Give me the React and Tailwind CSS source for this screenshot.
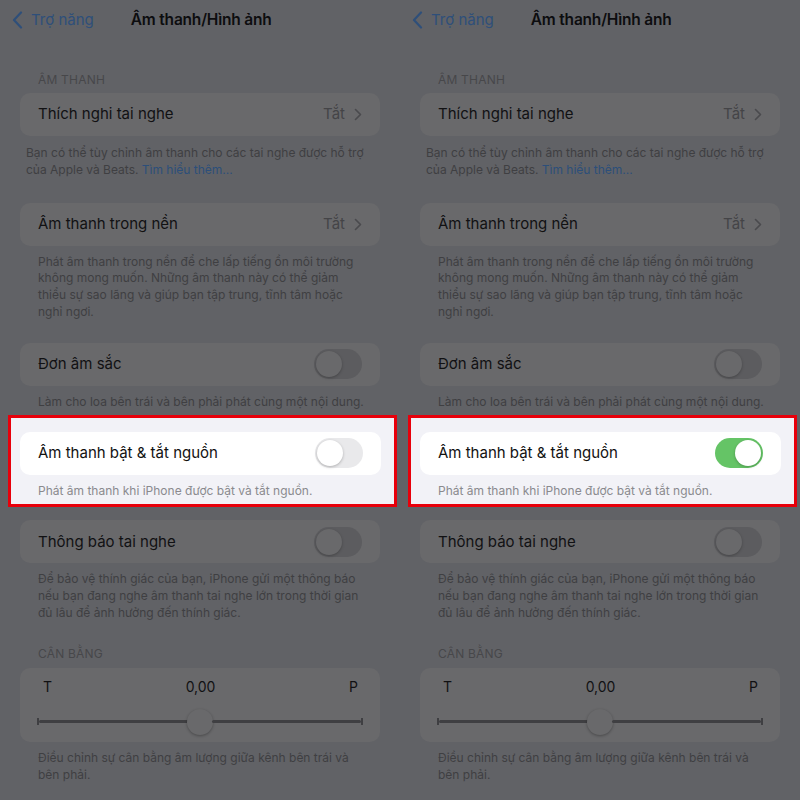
import React from 'react'

const font = { fontFamily: "Inter, 'Noto Sans', sans-serif" }

function Chevron({ className }) {
  return (
    <svg width="8" height="13" viewBox="0 0 8 13" fill="none" className={className}>
      <path d="M1.5 1.5L6.5 6.5L1.5 11.5" stroke="currentColor" strokeWidth="1.6" strokeLinecap="round" strokeLinejoin="round" />
    </svg>
  )
}

function Toggle({ on, dim }) {
  if (dim) {
    return (
      <div className="w-[48px] h-[30px] rounded-full bg-[#5c5c5f] p-[2px] flex">
        <div className="w-[26px] h-[26px] rounded-full bg-[#69696b] shadow-[0_1px_3px_rgba(0,0,0,0.25)]" />
      </div>
    )
  }
  return (
    <div className={`w-[48px] h-[30px] rounded-full p-[2px] flex ${on ? 'bg-[#65c466] justify-end' : 'bg-[#e9e9eb] justify-start'}`}>
      <div className="w-[26px] h-[26px] rounded-full bg-white shadow-[0_1px_3px_rgba(0,0,0,0.25)]" />
    </div>
  )
}

function DimRow({ label, value, toggle }) {
  return (
    <div className="mx-[20px] h-[43px] rounded-[10px] bg-[#69696b] flex items-center pl-[18px] pr-[18px]">
      <span className="text-[15px] text-[#111113] flex-grow">{label}</span>
      {value && (
        <div className="flex items-center gap-[9px] text-[#444447]">
          <span className="text-[15px]">{value}</span>
          <Chevron className="text-[#4a4a4d]" />
        </div>
      )}
      {toggle && <Toggle dim />}
    </div>
  )
}

function Footer({ lines, className = 'pl-[38px]' }) {
  return (
    <div className={`${className} pr-[10px] text-[12px] leading-[16.8px] text-[#3f3f42]`}>
      {lines.map((l, i) => (
        <div key={i}>{l}</div>
      ))}
    </div>
  )
}

function Panel({ on }) {
  return (
    <div className="w-[400px] h-[800px] bg-[#616266] overflow-hidden" style={font}>
      {/* nav bar */}
      <div className="h-[40px] flex items-center">
        <div className="flex items-center pl-[12px] gap-[8px] text-[#2e4f7a]">
          <svg width="11" height="18" viewBox="0 0 11 18" fill="none">
            <path d="M9 1.5L2 9L9 16.5" stroke="currentColor" strokeWidth="2.2" strokeLinecap="round" strokeLinejoin="round" />
          </svg>
          <span className="text-[15px]">Trợ năng</span>
        </div>
        <span className="ml-[37px] text-[15.5px] font-semibold text-[#0d0d0f] tracking-[-0.2px]">Âm thanh/Hình ảnh</span>
      </div>

      <div className="pt-[31px] pl-[38px] text-[12px] text-[#47474a] tracking-[0.2px] h-[53px]">ÂM THANH</div>
      <DimRow label="Thích nghi tai nghe" value="Tắt" />
      <div className="pt-[9px]">
        <Footer
          className="pl-[26px]"
          lines={[
            'Bạn có thể tùy chỉnh âm thanh cho các tai nghe được hỗ trợ',
            <>
              của Apple và Beats. <span className="text-[#2c4f7a]">Tìm hiểu thêm...</span>
            </>,
          ]}
        />
      </div>

      <div className="h-[24px]" />
      <DimRow label="Âm thanh trong nền" value="Tắt" />
      <div className="pt-[8px]">
        <Footer
          lines={[
            'Phát âm thanh trong nền để che lấp tiếng ồn môi trường',
            'không mong muốn. Những âm thanh này có thể giảm',
            'thiểu sự sao lãng và giúp bạn tập trung, tĩnh tâm hoặc',
            'nghỉ ngơi.',
          ]}
        />
      </div>

      <div className="h-[22px]" />
      <DimRow label="Đơn âm sắc" toggle />
      <div className="pt-[8px]">
        <Footer lines={['Làm cho loa bên trái và bên phải phát cùng một nội dung.']} />
      </div>

      {/* highlighted section */}
      <div className="mt-[4px] ml-[8px] w-[389px] border-[3px] border-[#e8000b] bg-[#f2f2f7] pt-[14px] pb-[5px]">
        <div className="ml-[9px] w-[361px] h-[43px] rounded-[10px] bg-white flex items-center pl-[18px] pr-[18px]">
          <span className="text-[15px] text-[#111] flex-grow">Âm thanh bật &amp; tắt nguồn</span>
          <Toggle on={on} />
        </div>
        <div className="pt-[8px] pl-[27px] text-[12px] leading-[16.8px] text-[#8a8a8e]">
          Phát âm thanh khi iPhone được bật và tắt nguồn.
        </div>
      </div>

      <div className="h-[13px]" />
      <DimRow label="Thông báo tai nghe" toggle />
      <div className="pt-[8px]">
        <Footer
          lines={[
            'Để bảo vệ thính giác của bạn, iPhone gửi một thông báo',
            'nếu bạn đang nghe âm thanh tai nghe lớn trong thời gian',
            'đủ lâu để ảnh hưởng đến thính giác.',
          ]}
        />
      </div>

      <div className="pt-[23px] pl-[38px] text-[12px] text-[#47474a] h-[46px] tracking-[0.2px]">CÂN BẰNG</div>
      <div className="mx-[20px] h-[74px] rounded-[10px] bg-[#69696b] px-[17px] pt-[8px]">
        <div className="flex items-center justify-between text-[14px] text-[#111113] pl-[6px] pr-[5px]">
          <span>T</span>
          <span>0,00</span>
          <span>P</span>
        </div>
        <div className="mt-[12px] flex items-center">
          <div className="w-[2px] h-[7px] bg-[#3f3f42]" />
          <div className="flex-grow h-[3px] bg-[#3f3f42] rounded-full" />
          <div className="w-[26px] h-[26px] rounded-full bg-[#69696b] shadow-[0_1px_3px_rgba(0,0,0,0.3)] mx-[-1px]" />
          <div className="flex-grow h-[3px] bg-[#3f3f42] rounded-full" />
          <div className="w-[2px] h-[7px] bg-[#3f3f42]" />
        </div>
      </div>
      <div className="pt-[8px]">
        <Footer lines={['Điều chỉnh sự cân bằng âm lượng giữa kênh bên trái và', 'bên phải.']} />
      </div>
    </div>
  )
}

export default function App() {
  return (
    <div className="flex w-[800px] h-[800px]">
      <Panel on={false} />
      <Panel on={true} />
    </div>
  )
}
